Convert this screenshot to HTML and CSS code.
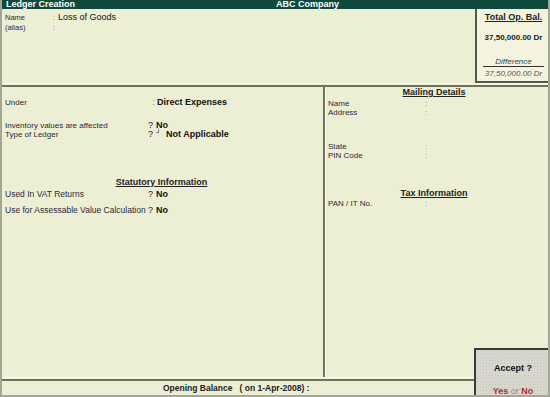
FILE: index.html
```html
<!DOCTYPE html>
<html>
    <head>
        <meta charset="UTF-8">
        <title>Ledger Creation</title>
        <link rel="stylesheet" href="styles.css">
    </head>
    <body>
        <div id="screen">
            <div class="titlebar">
                <span class="title-left">Ledger Creation</span>
                <span class="title-center">ABC Company</span>
            </div>
            <div class="top">
                <div class="top-fields">
                    <div class="row name-row">
                        <span class="top-label">Name</span>
                        <span class="top-colon">:</span>
                        <span class="name-value">Loss of Goods</span>
                    </div>
                    <div class="row alias-row">
                        <span class="top-label">(alias)</span>
                        <span class="top-colon">:</span>
                    </div>
                </div>
                <div class="opbal">
                    <div class="opbal-title">Total Op. Bal.</div>
                    <div class="opbal-amount">37,50,000.00 Dr</div>
                    <div class="opbal-diff">Difference</div>
                    <div class="opbal-diffamt">37,50,000.00 Dr</div>
                </div>
            </div>
            <div class="separator"></div>
            <div class="middle">
                <div class="panel-left">
                    <div class="row under-row">
                        <span class="lbl">Under</span>
                        <span class="mark colon">:</span>
                        <span class="val">Direct Expenses</span>
                    </div>
                    <div class="row inv-row">
                        <span class="lbl">Inventory values are affected</span>
                        <span class="mark">?</span>
                        <span class="val">No</span>
                    </div>
                    <div class="row">
                        <span class="lbl">Type of Ledger</span>
                        <span class="mark">?</span>
                        <span class="corner">&#9496;</span>
                        <span class="val">Not Applicable</span>
                    </div>
                    <div class="section-head stat-head"><span>Statutory Information</span></div>
                    <div class="row vat-row">
                        <span class="lbl lbl-big">Used In VAT Returns</span>
                        <span class="mark mark-big">?</span>
                        <span class="val">No</span>
                    </div>
                    <div class="row ass-row">
                        <span class="lbl lbl-big">Use for Assessable Value Calculation</span>
                        <span class="mark mark-big">?</span>
                        <span class="val">No</span>
                    </div>
                </div>
                <div class="divider"></div>
                <div class="panel-right">
                    <div class="section-head mail-head"><span>Mailing Details</span></div>
                    <div class="row mail-first">
                        <span class="rlbl">Name</span><span class="rcolon">:</span>
                    </div>
                    <div class="row">
                        <span class="rlbl">Address</span><span class="rcolon">:</span>
                    </div>
                    <div class="row state-row">
                        <span class="rlbl">State</span><span class="rcolon">:</span>
                    </div>
                    <div class="row">
                        <span class="rlbl">PIN Code</span><span class="rcolon">:</span>
                    </div>
                    <div class="section-head tax-head"><span>Tax Information</span></div>
                    <div class="row pan-row">
                        <span class="rlbl">PAN / IT No.</span><span class="rcolon">:</span>
                    </div>
                </div>
            </div>
            <div class="separator"></div>
            <div class="footer">Opening Balance &nbsp; ( on 1-Apr-2008) :</div>
            <div class="accept">
                <div class="accept-q">Accept ?</div>
                <div class="accept-yn"><span class="yn">Yes</span> <span class="or">or</span> <span class="yn">No</span></div>
            </div>
        </div>
    </body>
</html>
```

FILE: styles.css
```css
body{
    margin: 0;
    padding: 0;
    font-family: "Liberation Sans", Arial, sans-serif;
    background-color: #ECEFD4;
}
#screen{
    position: relative;
    width: 550px;
    height: 397px;
    box-sizing: border-box;
    display: flex;
    flex-direction: column;
    background-color: #ECEFD4;
    border-left: 2px solid #A3A596;
    border-right: 2px solid #A3A596;
    border-bottom: 2px solid #A3A596;
    overflow: hidden;
    color: #2E2838;
}
.titlebar{
    height: 9px;
    margin: 0 -2px;
    background-color: #0F4A3D;
    color: #FFF;
    font-size: 9px;
    font-weight: bold;
    line-height: 9px;
    position: relative;
}
.title-left{
    padding-left: 6px;
}
.title-center{
    position: absolute;
    left: 276px;
    top: 0;
}
.row{
    display: flex;
    align-items: baseline;
    height: 9px;
    line-height: 9px;
    font-size: 8px;
    white-space: nowrap;
}
.top{
    display: flex;
    height: 74px;
}
.top-fields{
    flex: 1;
    padding: 4px 0 0 3px;
}
.top-label{
    width: 48px;
    font-size: 7.5px;
}
.top-colon{
    width: 5px;
    color: #888;
}
.name-value{
    font-size: 9px;
    color: #111;
}
.alias-row{
    margin-top: 1px;
}
.opbal{
    width: 75px;
    box-sizing: border-box;
    border-left: 2px solid #55574A;
    border-bottom: 2px solid #55574A;
    background-color: #F4F4DE;
    text-align: center;
    font-size: 8px;
    color: #222;
    margin-right: -2px;
}
.opbal-title{
    margin-top: 3px;
    font-size: 9px;
    font-weight: bold;
    text-decoration: underline;
}
.opbal-amount{
    margin-top: 11px;
    font-weight: bold;
}
.opbal-diff{
    margin: 15px 6px 0;
    font-style: italic;
    color: #444;
    border-bottom: 1px solid #333;
    line-height: 9px;
}
.opbal-diffamt{
    margin-top: 2px;
    font-style: italic;
    color: #555;
}
.separator{
    height: 1px;
    border-top: 1px solid #FFFFF0;
    border-bottom: 2px solid #6F7265;
}
.middle{
    flex: 1;
    display: flex;
}
.panel-left{
    width: 318px;
    padding: 11px 0 0 3px;
}
.divider{
    width: 2px;
    background-color: #6F7265;
    border-right: 1px solid #FFFFF0;
}
.panel-right{
    flex: 1;
    padding: 0 0 0 2px;
}
.lbl{
    width: 143px;
}
.lbl-big{
    font-size: 8.5px;
}
.mark{
    width: 8px;
    font-size: 9px;
    color: #222;
}
.mark.colon{
    width: 5px;
    padding-left: 4px;
    color: #888;
}
.val{
    font-size: 9px;
    font-weight: bold;
    color: #111;
}
.corner{
    width: 10px;
    font-size: 7px;
    font-weight: bold;
    position: relative;
    top: -2px;
}
.inv-row{
    margin-top: 14px;
}
.section-head{
    height: 10px;
    line-height: 10px;
    font-size: 9px;
    font-weight: bold;
    color: #222;
    text-align: center;
}
.section-head span{
    text-decoration: underline;
}
.stat-head{
    margin-top: 38px;
    padding-right: 5px;
}
.vat-row{
    margin-top: 3px;
    height: 12px;
}
.ass-row{
    margin-top: 4px;
}
.mail-head{
    margin-right: 8px;
}
.mail-first{
    margin-top: 2px;
}
.rlbl{
    width: 97px;
}
.rcolon{
    color: #999;
}
.state-row{
    margin-top: 25px;
}
.tax-head{
    margin-top: 28px;
    margin-right: 8px;
}
.pan-row{
    margin-top: 1px;
}
.footer{
    height: 14px;
    line-height: 14px;
    font-size: 8.5px;
    font-weight: bold;
    color: #222;
    padding-left: 161px;
}
.accept{
    position: absolute;
    right: -2px;
    bottom: -2px;
    width: 76px;
    height: 49px;
    box-sizing: border-box;
    border: 2px solid #3A3A38;
    border-right: none;
    border-bottom: none;
    background-color: #D7D7CF;
    background-image: radial-gradient(#C6C6BD 0.5px, transparent 0.6px);
    background-size: 3px 3px;
    text-align: center;
    font-size: 9px;
    font-weight: bold;
}
.accept-q{
    margin-top: 13px;
    color: #111;
}
.accept-yn{
    margin-top: 13px;
}
.yn{
    color: #B03030;
}
.or{
    color: #8A8A86;
    font-weight: normal;
}
```
